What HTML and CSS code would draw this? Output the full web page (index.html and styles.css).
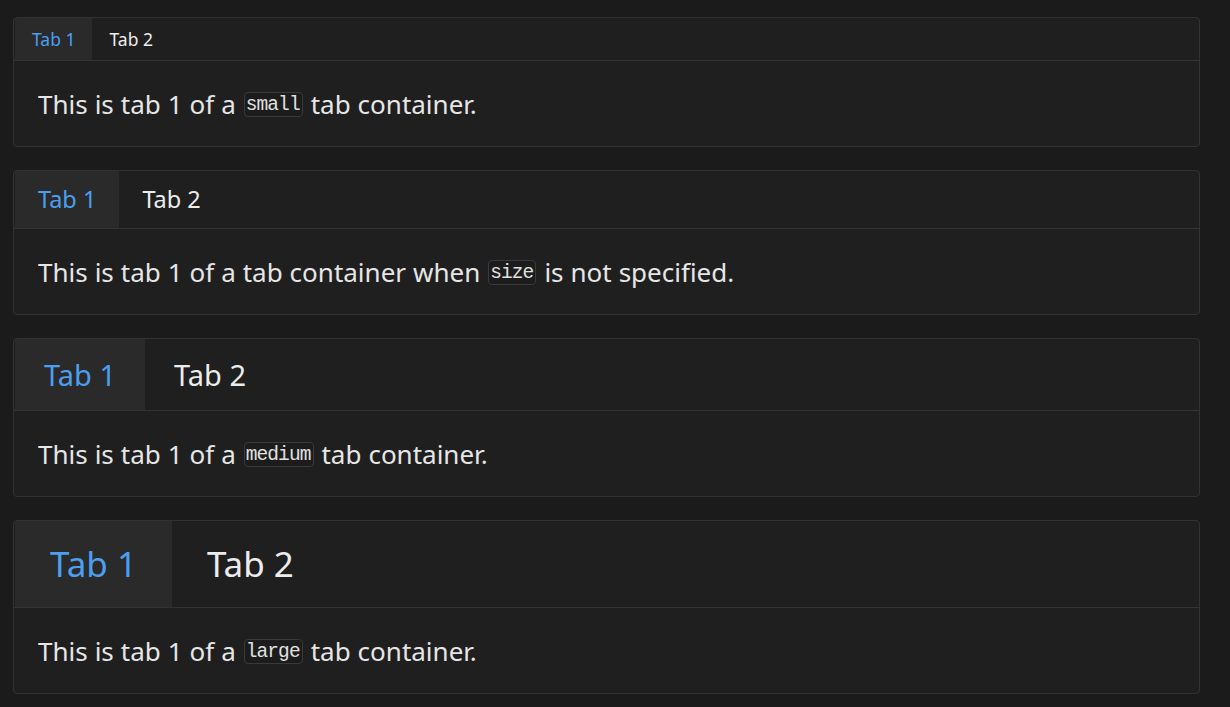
FILE: index.html
```html
<!DOCTYPE html>
<html>
<head>
<meta charset="utf-8">
<link rel="stylesheet" href="styles.css">
</head>
<body>
<div class="page">
  <div class="tabs tabs-small">
    <div class="tab-bar">
      <div class="tab active">Tab 1</div>
      <div class="tab">Tab 2</div>
    </div>
    <div class="panel">This is tab 1 of a <code>small</code> tab container.</div>
  </div>
  <div class="tabs tabs-default">
    <div class="tab-bar">
      <div class="tab active">Tab 1</div>
      <div class="tab">Tab 2</div>
    </div>
    <div class="panel">This is tab 1 of a tab container when <code>size</code> is not specified.</div>
  </div>
  <div class="tabs tabs-medium">
    <div class="tab-bar">
      <div class="tab active">Tab 1</div>
      <div class="tab">Tab 2</div>
    </div>
    <div class="panel">This is tab 1 of a <code>medium</code> tab container.</div>
  </div>
  <div class="tabs tabs-large">
    <div class="tab-bar">
      <div class="tab active">Tab 1</div>
      <div class="tab">Tab 2</div>
    </div>
    <div class="panel">This is tab 1 of a <code>large</code> tab container.</div>
  </div>
</div>
</body>
</html>
```
FILE: styles.css
```css
html, body {
  margin: 0;
  background: #1b1b1b;
}
body {
  font-family: "Noto Sans", "Open Sans", sans-serif;
  color: #e6e6e6;
}
.page {
  width: 1187px;
  padding: 17px 0 0 13px;
  display: flex;
  flex-direction: column;
  gap: 23px;
}
.tabs {
  background: #1f1f1f;
  border: 1px solid #323232;
  border-radius: 4px;
  overflow: hidden;
}
.tab-bar {
  display: flex;
  border-bottom: 1px solid #333;
  padding-left: 1px;
}
.tab {
  color: #ececec;
  white-space: nowrap;
}
.tab.active {
  background: #2a2a2a;
  color: #4c9fee;
}
.panel {
  height: 85px;
  box-sizing: border-box;
  padding: 0 24px;
  display: flex;
  align-items: center;
  font-size: 26px;
  word-spacing: 0.2px;
  white-space: pre;
}
code {
  font-family: "Liberation Mono", "DejaVu Sans Mono", monospace;
  font-size: 19.5px;
  letter-spacing: -0.9px;
  word-spacing: 0;
  background: #1c1c1c;
  border: 1px solid #3a3a3a;
  border-radius: 4px;
  padding: 1px 2px 0 1px;
  margin: 0 1px;
  color: #e0e0e0;
  position: relative;
  top: 1px;
}
.tabs-small .tab { font-size: 17.5px; line-height: 42px; padding: 0 17px; }
.tabs-default .tab { font-size: 23.5px; line-height: 57px; padding: 0 23px; }
.tabs-medium .tab { font-size: 29px; line-height: 71px; padding: 0 29px; }
.tabs-large .tab { font-size: 35px; line-height: 86px; padding: 0 35px; }
```
